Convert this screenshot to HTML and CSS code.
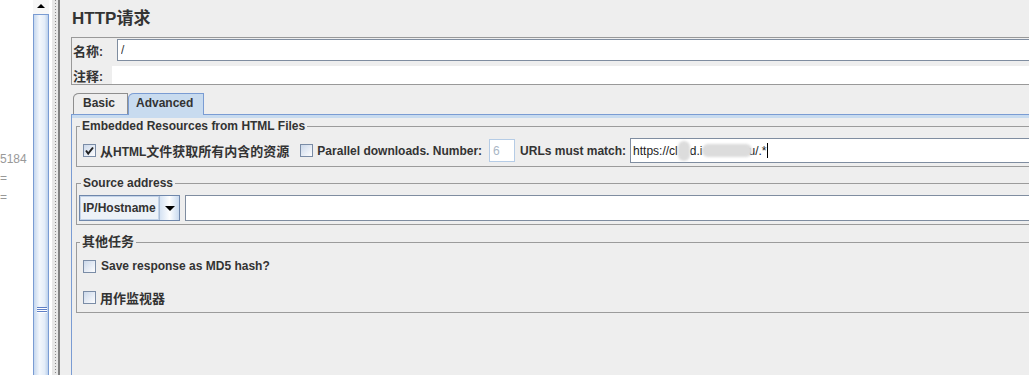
FILE: index.html
```html
<!DOCTYPE html>
<html lang="zh">
<head>
    <meta charset="UTF-8">
    <title>HTTP请求</title>
    <link rel="stylesheet" href="styles.css">
</head>
<body>

<div class="window">
    <!-- Left: log pane, almost hidden behind the splitter -->
    <div class="log">
        <div>5184</div>
        <div>=</div>
        <div>=</div>
    </div>
    <div class="scrollbar">
        <div class="scroll-up"><span class="arrow-up"></span></div>
        <div class="scroll-thumb"><span class="grip"></span></div>
    </div>
    <div class="splitter"></div>

    <!-- Right: sampler editor -->
    <div class="editor">
        <h1 class="title">HTTP请求</h1>

        <div class="name-box">
            <div class="name-row">
                <label class="name-label"><span class="cn">名称</span>:</label>
                <input type="text" class="field" value="/">
            </div>
            <div class="comment-row">
                <label class="comment-label"><span class="cn">注释</span>:</label>
                <input type="text" class="comment-field">
            </div>
        </div>

        <div class="tabs">
            <div class="tab">Basic</div>
            <div class="tab active">Advanced</div>
        </div>

        <div class="tab-panel">
            <fieldset class="group group-embedded">
                <legend>Embedded Resources from HTML Files</legend>
                <div class="row">
                    <span class="check">
                        <svg width="11" height="11" viewBox="0 0 11 11"><path d="M2 5.5 L4.2 8.5 L9 2.5" fill="none" stroke="#222" stroke-width="2"/></svg>
                    </span>
                    <span class="check-label"><span class="cn">从</span>HTML<span class="cn">文件获取所有内含的资源</span></span>
                    <span class="check check-gap"></span>
                    <span class="check-label">Parallel downloads. Number:</span>
                    <input type="text" class="num-field" value="6" disabled>
                    <span class="url-label">URLs must match:</span>
                    <div class="url-field">
                        <span>https://cl</span><span class="blur blur-a"></span><span>d.i</span><span class="blur blur-b"></span><span>u/.*</span><span class="caret"></span>
                    </div>
                </div>
            </fieldset>

            <fieldset class="group group-source">
                <legend>Source address</legend>
                <div class="row source-row">
                    <div class="combo">
                        <span class="combo-text">IP/Hostname</span>
                        <span class="combo-button"><span class="arrow-down"></span></span>
                    </div>
                    <input type="text" class="source-field">
                </div>
            </fieldset>

            <fieldset class="group group-other">
                <legend><span class="cn">其他任务</span></legend>
                <div class="row task-row">
                    <span class="check"></span>
                    <span class="check-label md5-label">Save response as MD5 hash?</span>
                </div>
                <div class="row task-row monitor-row">
                    <span class="check"></span>
                    <span class="check-label"><span class="cn">用作监视器</span></span>
                </div>
            </fieldset>
        </div>
    </div>
</div>

</body>
</html>
```

FILE: styles.css
```css
* {
    box-sizing: border-box;
}

body {
    margin: 0;
    width: 1029px;
    height: 375px;
    overflow: hidden;
    font-family: "Liberation Sans", "Noto Sans CJK SC", sans-serif;
    font-size: 12px;
    color: #333;
    background-color: #eeeeee;
}

.cn {
    font-size: 13px;
}

.window {
    display: flex;
    height: 100%;
}

/* log pane + scrollbar + splitter */
.log {
    width: 33px;
    flex-shrink: 0;
    padding-top: 150px;
    background-color: #fff;
    color: #999;
    line-height: 19px;
    overflow: hidden;
}

.scrollbar {
    width: 16px;
    flex-shrink: 0;
    display: flex;
    flex-direction: column;
}

.scroll-up {
    height: 15px;
    padding-top: 4px;
    background-color: #f7f7f7;
    border-bottom: 1px solid #7a9cd3;
    display: flex;
    justify-content: center;
}

.arrow-up {
    width: 0;
    height: 0;
    border-left: 4px solid transparent;
    border-right: 4px solid transparent;
    border-bottom: 4px solid #000;
}

.scroll-thumb {
    flex: 1;
    padding: 292px 0 0 3px;
    border-left: 1px solid #7a9cd3;
    border-right: 1px solid #7a9cd3;
    background: linear-gradient(to right, #c6d8ef, #f3f7fc 40%, #e4edf8 75%, #bcd1ec);
}

.grip {
    display: block;
    width: 10px;
    height: 6px;
    background: repeating-linear-gradient(to bottom, #5f7fc6 0 1px, #fff 1px 2px);
}

.splitter {
    width: 11px;
    flex-shrink: 0;
    border-left: 3px solid #fff;
    border-right: 2px solid #808080;
    background-color: #e8e8e8;
    background-image: linear-gradient(to bottom, #8a8a8a 1px, transparent 1px);
    background-size: 1px 3px;
    background-repeat: repeat-y;
    background-position: 3px 0;
}

/* editor */
.editor {
    flex: 1;
    min-width: 0;
    padding-left: 11px;
    display: flex;
    flex-direction: column;
    overflow: hidden;
}

.title {
    margin: 0;
    height: 37px;
    padding: 9px 0 0 1px;
    font-size: 17px;
    line-height: 20px;
    font-weight: bold;
}

.name-box {
    height: 48px;
    margin-right: -2px;
    border: 1px solid #999;
    border-right: none;
}

.name-row {
    display: flex;
    align-items: center;
    height: 22px;
    margin-top: 1px;
}

.comment-row {
    display: flex;
    align-items: center;
    height: 18px;
    margin-top: 5px;
}

.name-label,
.comment-label {
    flex-shrink: 0;
    padding-left: 1px;
    font-weight: bold;
}

.name-label {
    width: 45px;
}

.comment-label {
    width: 40px;
}

.field {
    flex: 1;
    height: 22px;
    padding: 0 3px;
    border: 1px solid #7f8da0;
    background-color: #fff;
    font: inherit;
    color: #333;
    outline: none;
}

.comment-field {
    flex: 1;
    height: 18px;
    border: none;
    background-color: #fff;
    outline: none;
}

/* tabs */
.tabs {
    display: flex;
    height: 21px;
    margin: 8px 0 0 2px;
}

.tab {
    height: 21px;
    padding-left: 9px;
    border: 1px solid #8e8e8e;
    border-bottom: none;
    border-top-left-radius: 6px 5px;
    line-height: 18px;
    font-weight: bold;
    width: 55px;
}

.tab.active {
    position: relative;
    z-index: 1;
    width: 76px;
    height: 22px;
    padding-left: 7px;
    border-color: #7a9cd3;
    background-color: #c8dbef;
}

.tab-panel {
    flex: 1;
    border-top: 1px solid #7a9cd3;
    border-left: 1px solid #7a9cd3;
    box-shadow: inset 0 3px 0 #c8dbef;
}

/* titled groups */
.group {
    margin: 4px -10px 0 4px;
    border: 1px solid #9b9b9b;
    min-width: 0;
}

.group legend {
    padding: 0 2px;
    margin-left: -3px;
    line-height: 14px;
    font-weight: bold;
}

.group-embedded {
    padding: 5px 0 3px 6px;
}

.group-source {
    margin-top: 9px;
    padding: 5px 0 3px 2px;
}

.group-source legend {
    margin-left: 2px;
}

.group-other {
    margin-top: 10px;
    padding: 7px 0 5px 6px;
}

.row {
    display: flex;
    align-items: center;
    height: 25px;
}

.check {
    flex-shrink: 0;
    width: 13px;
    height: 13px;
    border: 1px solid #7a8ca6;
    background: linear-gradient(135deg, #cbd8ea, #fdfdfe);
    display: flex;
    align-items: center;
    justify-content: center;
}

.check-label {
    margin-left: 4px;
    font-weight: bold;
    white-space: nowrap;
}

.check-gap {
    margin-left: 11px;
}

.num-field {
    width: 26px;
    height: 23px;
    margin-left: 7px;
    padding: 0 3px;
    border: 1px solid #b5cce6;
    background-color: #fff;
    font: inherit;
    color: #a9b6c5;
}

.url-label {
    margin-left: 5px;
    font-weight: bold;
    white-space: nowrap;
}

.url-field {
    flex: 1;
    height: 25px;
    margin-left: 4px;
    padding-left: 2px;
    border: 1px solid #7f8da0;
    background-color: #fff;
    display: flex;
    align-items: center;
    color: #222;
    white-space: nowrap;
}

.blur {
    display: inline-block;
    background-color: #dcdcdc;
    filter: blur(1px);
}

.blur-a {
    width: 12px;
    height: 20px;
    border-radius: 6px;
}

.blur-b {
    width: 50px;
    height: 13px;
    margin-right: -4px;
    border-radius: 6px;
}

.caret {
    width: 1px;
    height: 15px;
    margin-left: 1px;
    background-color: #000;
}

.source-row {
    height: 26px;
}

.combo {
    width: 101px;
    height: 26px;
    flex-shrink: 0;
    border: 1px solid #6f87ab;
    display: flex;
}

.combo-text {
    flex: 1;
    padding-left: 2px;
    line-height: 23px;
    font-weight: bold;
    background-color: #edf2f8;
    border: 1px solid #c3d3e8;
}

.combo-button {
    width: 20px;
    border-left: 1px solid #a9bcd6;
    background: linear-gradient(to right, #d6e3f3, #fdfeff 50%, #c9daef);
    display: flex;
    align-items: center;
    justify-content: center;
}

.arrow-down {
    width: 0;
    height: 0;
    border-left: 5px solid transparent;
    border-right: 5px solid transparent;
    border-top: 5px solid #000;
}

.source-field {
    flex: 1;
    height: 26px;
    margin-left: 5px;
    border: 1px solid #7f8da0;
    background-color: #fff;
    outline: none;
}

.task-row {
    height: 20px;
}

.monitor-row {
    margin-top: 11px;
}

.md5-label {
    margin-left: 5px;
}
```
